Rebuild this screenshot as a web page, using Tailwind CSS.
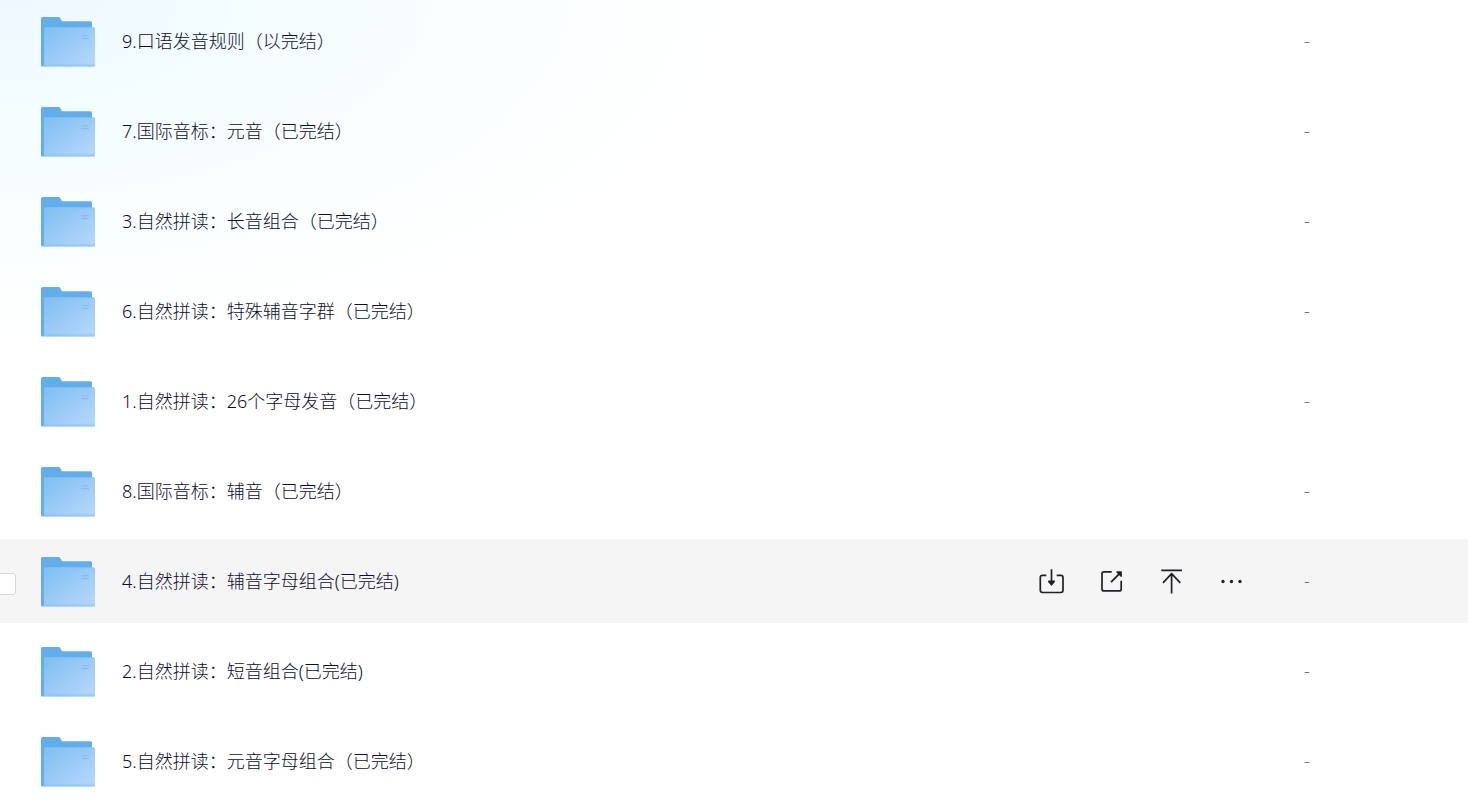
<!DOCTYPE html>
<html lang="zh-CN">

<head>
    <meta charset="UTF-8">
    <meta name="viewport" content="width=device-width, initial-scale=1.0">
    <title>文件列表</title>
    <script src="https://cdn.jsdelivr.net/npm/@tailwindcss/browser@4"></script>
</head>

<body class="h-screen overflow-hidden bg-white font-['Noto_Sans','Noto_Sans_CJK_SC',sans-serif] text-lg font-light text-[#0c0c30]">
    <!-- shared folder icon -->
    <svg class="absolute size-0" aria-hidden="true">
        <defs>
            <linearGradient id="front" x1="0" y1="0" x2="1" y2="1">
                <stop offset="0" stop-color="#7dbff2" />
                <stop offset="0.5" stop-color="#9ccbf6" />
                <stop offset="1" stop-color="#b7d9fb" />
            </linearGradient>
            <linearGradient id="edge" x1="0" y1="0" x2="0" y2="1">
                <stop offset="0" stop-color="#83bdf2" stop-opacity="0" />
                <stop offset="1" stop-color="#83bdf2" stop-opacity="0.8" />
            </linearGradient>
        </defs>
        <symbol id="folder" viewBox="0 0 54 52">
            <path d="M0 3.5A1.5 1.5 0 0 1 1.5 2H17.6Q18.8 2 19.4 3.2L21 6.2H49.5A1.5 1.5 0 0 1 51 7.7V40L3 51.6H1A1 1 0 0 1 0 50.6Z" fill="#63aeea" />
            <path d="M3 13.8A1.3 1.3 0 0 1 4.3 12.5H52.6A1.4 1.4 0 0 1 54 13.9V50.2A1.4 1.4 0 0 1 52.6 51.6H3Z" fill="url(#front)" />
            <path d="M3 48H54V50.2A1.4 1.4 0 0 1 52.6 51.6H3Z" fill="url(#edge)" />
            <path d="M1 51.4H53" stroke="#b5dafa" stroke-width="0.8" />
            <path d="M3.4 13H53.4" stroke="#8cc4f4" stroke-width="0.8" />
            <path d="M40.5 20.7H48M40.5 23.6H48" stroke="#82b9ee" stroke-width="1" />
        </symbol>
    </svg>

    <main class="min-h-screen bg-[radial-gradient(760px_360px_at_0_0,#eef8ff_0%,#f3fcff_30%,#fafeff_65%,#ffffff_100%)]">
        <table class="-mt-[7px] w-full table-fixed border-separate border-spacing-x-0 border-spacing-y-[6px]">
            <colgroup>
                <col class="w-[41px]">
                <col>
                <col class="w-[266px]">
                <col class="w-[164px]">
            </colgroup>
            <tbody>
                <tr class="h-[84px]">
                    <td></td>
                    <td><a href="#" class="flex items-center gap-[27px]"><svg class="h-[52px] w-[54px]"><use href="#folder" /></svg>9.口语发音规则（以完结）</a></td>
                    <td></td>
                    <td class="pb-0.5 text-[#6f7080]">-</td>
                </tr>
                <tr class="h-[84px]">
                    <td></td>
                    <td><a href="#" class="flex items-center gap-[27px]"><svg class="h-[52px] w-[54px]"><use href="#folder" /></svg>7.国际音标：元音（已完结）</a></td>
                    <td></td>
                    <td class="pb-0.5 text-[#6f7080]">-</td>
                </tr>
                <tr class="h-[84px]">
                    <td></td>
                    <td><a href="#" class="flex items-center gap-[27px]"><svg class="h-[52px] w-[54px]"><use href="#folder" /></svg>3.自然拼读：长音组合（已完结）</a></td>
                    <td></td>
                    <td class="pb-0.5 text-[#6f7080]">-</td>
                </tr>
                <tr class="h-[84px]">
                    <td></td>
                    <td><a href="#" class="flex items-center gap-[27px]"><svg class="h-[52px] w-[54px]"><use href="#folder" /></svg>6.自然拼读：特殊辅音字群（已完结）</a></td>
                    <td></td>
                    <td class="pb-0.5 text-[#6f7080]">-</td>
                </tr>
                <tr class="h-[84px]">
                    <td></td>
                    <td><a href="#" class="flex items-center gap-[27px]"><svg class="h-[52px] w-[54px]"><use href="#folder" /></svg>1.自然拼读：26个字母发音（已完结）</a></td>
                    <td></td>
                    <td class="pb-0.5 text-[#6f7080]">-</td>
                </tr>
                <tr class="h-[84px]">
                    <td></td>
                    <td><a href="#" class="flex items-center gap-[27px]"><svg class="h-[52px] w-[54px]"><use href="#folder" /></svg>8.国际音标：辅音（已完结）</a></td>
                    <td></td>
                    <td class="pb-0.5 text-[#6f7080]">-</td>
                </tr>
                <!-- hovered row -->
                <tr class="h-[84px] bg-[#f5f5f5]">
                    <td><input type="checkbox" aria-labelledby="name-4" class="-ml-[6px] mt-1.5 block size-[22px] appearance-none rounded-[3px] border border-[#d6d6d6] bg-white"></td>
                    <td><a id="name-4" href="#" class="flex items-center gap-[27px]"><svg class="h-[52px] w-[54px]"><use href="#folder" /></svg>4.自然拼读：辅音字母组合(已完结)</a></td>
                    <td>
                        <div class="flex gap-8 text-[#202027]">
                            <button type="button" aria-label="下载">
                                <svg class="size-7" viewBox="0 0 28 28" fill="none" stroke="currentColor" stroke-width="1.7">
                                    <path d="M8.3 8.4H4.5A2.2 2.2 0 0 0 2.3 10.6V23.3A2.2 2.2 0 0 0 4.5 25.5H22.8A2.2 2.2 0 0 0 25 23.3V10.6A2.2 2.2 0 0 0 22.8 8.4H18.7" />
                                    <path d="M13.5 2.3V16" />
                                    <path d="M10.8 14.4H16.2L13.5 17.8Z" fill="currentColor" stroke-linejoin="round" stroke-width="1.6" />
                                </svg>
                            </button>
                            <button type="button" aria-label="分享">
                                <svg class="size-7" viewBox="0 0 28 28" fill="none" stroke="currentColor" stroke-width="1.7">
                                    <path d="M13.7 4.8H6A2 2 0 0 0 4 6.8V21.9A2 2 0 0 0 6 23.9H21.2A2 2 0 0 0 23.2 21.9V13.7" />
                                    <path d="M13 15.2L21.5 6.7" />
                                    <path d="M19 5H23.2V9.2Z" fill="currentColor" stroke-linejoin="round" stroke-width="1.4" />
                                </svg>
                            </button>
                            <button type="button" aria-label="置顶">
                                <svg class="size-7" viewBox="0 0 28 28" fill="none" stroke="currentColor" stroke-width="1.7">
                                    <path d="M3.3 3.4H24M13.6 6.4V26.4M5 15.8L13.6 6.6L22.3 15.8" stroke-linejoin="round" />
                                </svg>
                            </button>
                            <button type="button" aria-label="更多">
                                <svg class="size-7" viewBox="0 0 28 28" fill="currentColor">
                                    <circle cx="5" cy="14.5" r="1.7" />
                                    <circle cx="13.5" cy="14.5" r="1.7" />
                                    <circle cx="22" cy="14.5" r="1.7" />
                                </svg>
                            </button>
                        </div>
                    </td>
                    <td class="pb-0.5 text-[#6f7080]">-</td>
                </tr>
                <tr class="h-[84px]">
                    <td></td>
                    <td><a href="#" class="flex items-center gap-[27px]"><svg class="h-[52px] w-[54px]"><use href="#folder" /></svg>2.自然拼读：短音组合(已完结)</a></td>
                    <td></td>
                    <td class="pb-0.5 text-[#6f7080]">-</td>
                </tr>
                <tr class="h-[84px]">
                    <td></td>
                    <td><a href="#" class="flex items-center gap-[27px]"><svg class="h-[52px] w-[54px]"><use href="#folder" /></svg>5.自然拼读：元音字母组合（已完结）</a></td>
                    <td></td>
                    <td class="pb-0.5 text-[#6f7080]">-</td>
                </tr>
            </tbody>
        </table>
    </main>
</body>

</html>
